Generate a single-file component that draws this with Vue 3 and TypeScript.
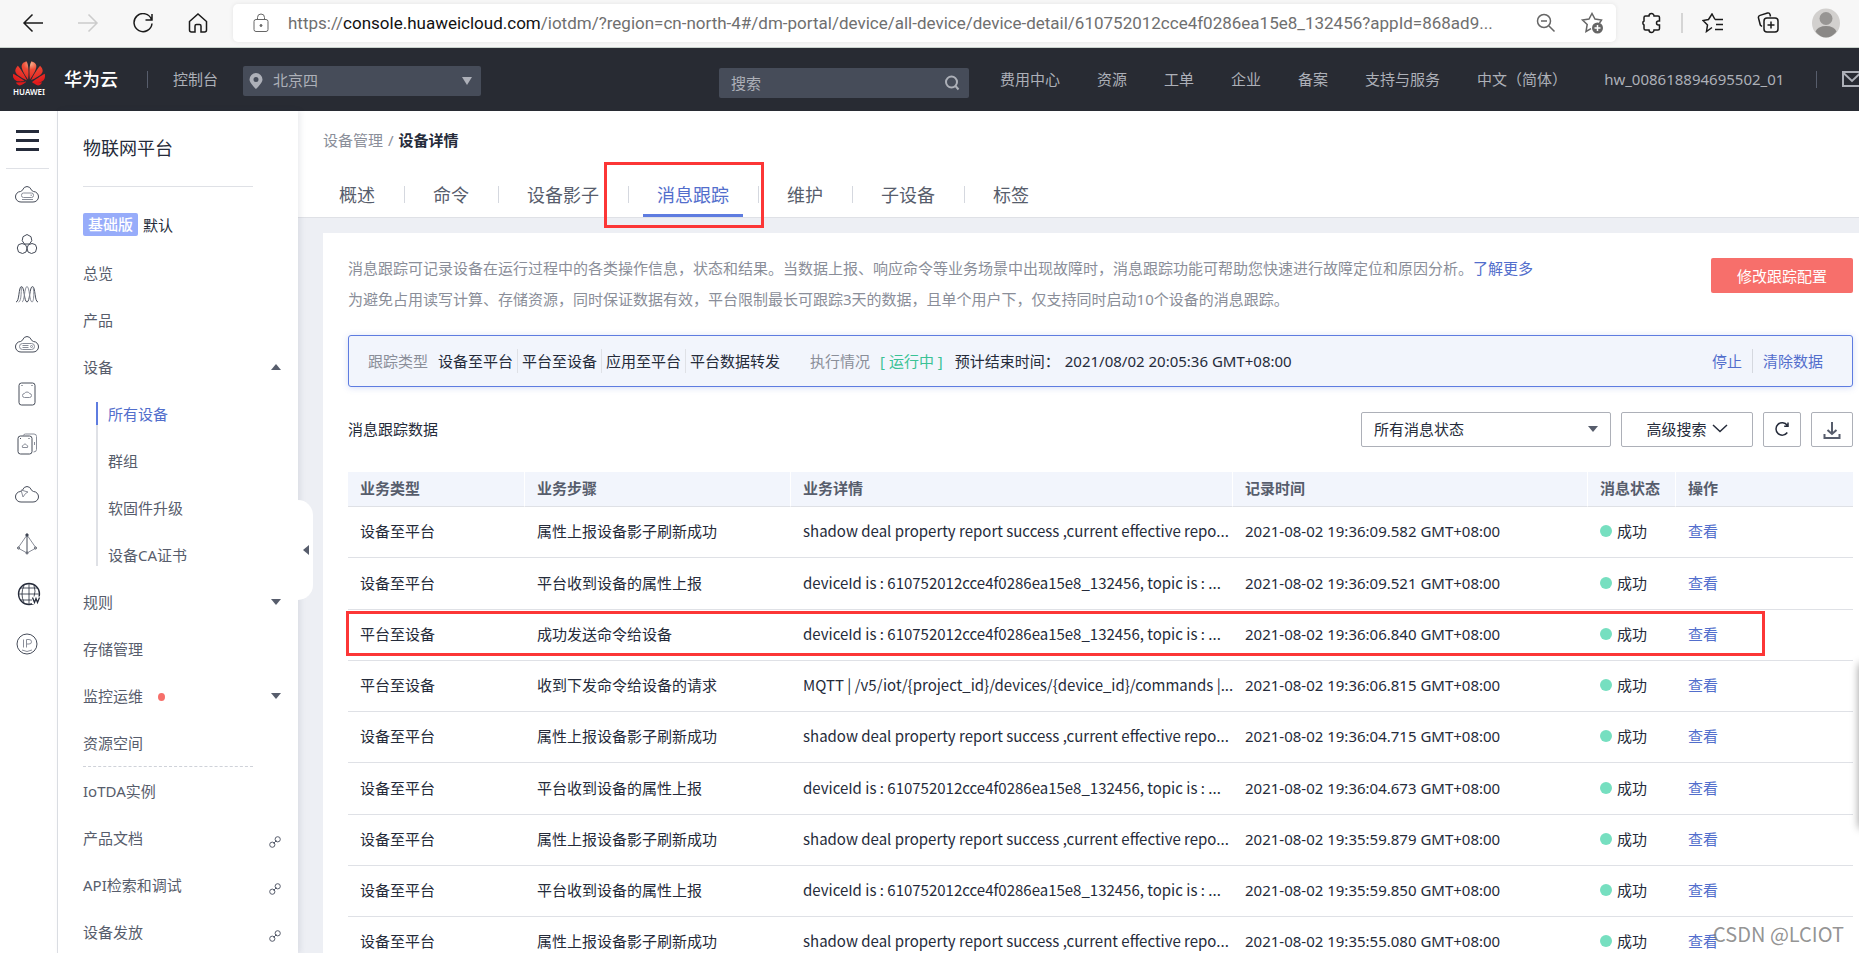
<script setup lang="ts">
import { ref } from 'vue'

interface NavItem {
  label: string
  caret?: 'up' | 'down'
  dot?: boolean
  link?: boolean
  divider?: boolean
  children?: string[]
}

interface TraceRow {
  type: string
  step: string
  detail: string
  time: string
  marked?: boolean
}

const headerLinks: string[] = ['费用中心', '资源', '工单', '企业', '备案', '支持与服务', '中文（简体）', 'hw_008618894695502_01']

const nav: NavItem[] = [
  { label: '总览' },
  { label: '产品' },
  { label: '设备', caret: 'up', children: ['所有设备', '群组', '软固件升级', '设备CA证书'] },
  { label: '规则', caret: 'down' },
  { label: '存储管理' },
  { label: '监控运维', caret: 'down', dot: true },
  { label: '资源空间', divider: true },
  { label: 'IoTDA实例' },
  { label: '产品文档', link: true },
  { label: 'API检索和调试', link: true },
  { label: '设备发放', link: true },
]

const tabs: string[] = ['概述', '命令', '设备影子', '消息跟踪', '维护', '子设备', '标签']
const activeTab = ref('消息跟踪')

const traceTypes: string[] = ['设备至平台', '平台至设备', '应用至平台', '平台数据转发']

const SHADOW = 'shadow deal property report success ,current effective repo...'
const DEVICE = 'deviceId is : 610752012cce4f0286ea15e8_132456, topic is : ...'

const rows: TraceRow[] = [
  { type: '设备至平台', step: '属性上报设备影子刷新成功', detail: SHADOW, time: '2021-08-02 19:36:09.582 GMT+08:00' },
  { type: '设备至平台', step: '平台收到设备的属性上报', detail: DEVICE, time: '2021-08-02 19:36:09.521 GMT+08:00' },
  { type: '平台至设备', step: '成功发送命令给设备', detail: DEVICE, time: '2021-08-02 19:36:06.840 GMT+08:00', marked: true },
  { type: '平台至设备', step: '收到下发命令给设备的请求', detail: 'MQTT | /v5/iot/{project_id}/devices/{device_id}/commands |...', time: '2021-08-02 19:36:06.815 GMT+08:00' },
  { type: '设备至平台', step: '属性上报设备影子刷新成功', detail: SHADOW, time: '2021-08-02 19:36:04.715 GMT+08:00' },
  { type: '设备至平台', step: '平台收到设备的属性上报', detail: DEVICE, time: '2021-08-02 19:36:04.673 GMT+08:00' },
  { type: '设备至平台', step: '属性上报设备影子刷新成功', detail: SHADOW, time: '2021-08-02 19:35:59.879 GMT+08:00' },
  { type: '设备至平台', step: '平台收到设备的属性上报', detail: DEVICE, time: '2021-08-02 19:35:59.850 GMT+08:00' },
  { type: '设备至平台', step: '属性上报设备影子刷新成功', detail: SHADOW, time: '2021-08-02 19:35:55.080 GMT+08:00' },
]
</script>

<template>
  <div class="page">
    <div class="browser">
      <button class="tool back" aria-label="后退">
        <svg width="22" height="20" viewBox="0 0 22 20"><path d="M21 10H2M10.500 1.500 2 10l8.500 8.500" /></svg>
      </button>
      <button class="tool forward" aria-label="前进">
        <svg width="22" height="20" viewBox="0 0 22 20"><path d="M1 10h19M11.500 1.500 20 10l-8.500 8.500" /></svg>
      </button>
      <button class="tool" aria-label="刷新">
        <svg width="22" height="20" viewBox="0 0 22 20"><path d="M19.500 6.500A9 9 0 1 0 20 10.500M20 1v6h-6.500" /></svg>
      </button>
      <button class="tool" aria-label="主页">
        <svg width="22" height="20" viewBox="0 0 22 20"><path d="M2.500 8.500 11 1l8.500 7.500V17q0 2-2 2H14v-6q0-1.500-1.500-1.500h-3Q8 11.500 8 13v6H4.500q-2 0-2-2z" /></svg>
      </button>
      <div class="address">
        <svg class="lock" width="16" height="20" viewBox="0 0 16 20"><rect x="1" y="6.500" width="14" height="12" rx="2" /><path d="M4.500 6.500V4.500a3.500 3.500 0 0 1 7 0v2" /><circle cx="8" cy="12.500" r="1" fill="#666" /></svg>
        <div class="url">https://<b>console.huaweicloud.com</b>/iotdm/?region=cn-north-4#/dm-portal/device/all-device/device-detail/610752012cce4f0286ea15e8_132456?appId=868ad9...</div>
        <button class="tool grey zoom" aria-label="缩放">
          <svg width="20" height="20" viewBox="0 0 20 20"><circle cx="8" cy="8" r="6.500" /><path d="M5 8h6M13 13l5.500 5.500" /></svg>
        </button>
        <button class="tool grey" aria-label="收藏">
          <svg width="24" height="22" viewBox="0 0 24 22"><path d="M19.500 11 21.500 8l-6.500-1L12 1.500 9 7 2.500 8l4.700 4.500L6 19.500l5-2.800" /><circle cx="17.500" cy="16" r="5.500" fill="#666" stroke="none" /><path d="M17.500 13v6M14.500 16h6" stroke="#fff" /></svg>
        </button>
      </div>
      <div class="extras">
        <button class="tool" aria-label="扩展">
          <svg width="20" height="22" viewBox="0 0 20 22"><path d="M4.500 4H8a2.500 2.500 0 0 1 5 0h4q1.500 0 1.500 1.500V9h-1a2 2 0 0 0 0 4h1v3.500q0 1.500-1.500 1.500h-4a2.500 2.500 0 0 1-5 0H4.500Q3 18 3 16.500V13a2.300 2.300 0 0 1 0-4V5.500Q3 4 4.500 4z" /></svg>
        </button>
        <i class="bar-sep"></i>
        <button class="tool" aria-label="收藏夹">
          <svg width="22" height="20" viewBox="0 0 22 20"><path d="M13 6.500h8M14 11.500h7M13 16.500h8M10 14.500 4.500 18.500 5.500 12 1 7.500l5.500-1L10 1l3 5.500" /></svg>
        </button>
        <button class="tool" aria-label="集锦">
          <svg width="22" height="22" viewBox="0 0 22 22"><path d="M5 14.500 3.300 13 1.500 6q-.5-2 1.500-2.600L10.500 1q2-.5 2.500 1.500l.5 2" /><rect x="7" y="6" width="14" height="14" rx="3" /><path d="M14 9.500v7M10.500 13h7" /></svg>
        </button>
        <button class="tool avatar" aria-label="个人资料">
          <svg width="28" height="30" viewBox="0 0 28 30"><ellipse cx="14" cy="15" rx="14" ry="14.500" fill="#d2d0ce" stroke="none" /><circle cx="14" cy="10.500" r="6.500" fill="#979593" stroke="none" /><path d="M3.500 23.500Q6 18 14 18t10.500 5.500Q20 29.500 14 29.500T3.500 23.500z" fill="#8a8886" stroke="none" /></svg>
        </button>
      </div>
    </div>

    <header class="topbar">
      <a class="logo" href="#">
        <svg width="32" height="25" viewBox="0 2.500 24 19" preserveAspectRatio="none">
          <defs>
            <radialGradient id="petal" cx=".55" cy=".1" r=".8"><stop offset="0" stop-color="#f7b08c" /><stop offset=".3" stop-color="#ee4a35" /><stop offset="1" stop-color="#e01a1c" /></radialGradient>
          </defs>
          <path fill="url(#petal)" d="M3.670 6.140S1.820 7.910 1.720 9.780v.35c.08 1.510 1.220 2.400 1.220 2.400 1.830 1.790 6.260 4.040 7.300 4.550 0 0 .06.03.1-.01l.02-.04v-.04C7.520 10.800 3.670 6.140 3.670 6.140zM9.650 18.600c-.02-.08-.1-.08-.1-.08l-7.380.26c.8 1.430 2.150 2.530 3.560 2.200.96-.25 3.160-1.780 3.880-2.300.06-.05.04-.09.04-.09zm.08-.12C6.490 16.020.21 12.280.21 12.280c-.15.46-.2.9-.21 1.300v.07c0 1.070.4 1.820.4 1.820.8 1.690 2.340 2.200 2.340 2.200.7.3 1.400.31 1.400.31.12.02 4.400 0 5.540 0 .05 0 .08-.05.08-.05v-.06c0-.03-.03-.05-.03-.05zM9.060 3.190a3.420 3.420 0 0 0-2.570 3.150v.41c.03.6.16 1.050.16 1.050.66 2.900 3.860 7.650 4.550 8.650.05.05.1.03.1.03a.1.1 0 0 0 .06-.1c1.060-10.600-1.110-13.420-1.110-13.420-.32.02-1.190.23-1.190.23zm8.300 2.270s-.49-1.800-2.440-2.280c0 0-.57-.14-1.170-.22 0 0-2.180 2.810-1.120 13.430.01.07.06.08.06.08.07.03.1-.03.1-.03.72-1.030 3.900-5.760 4.550-8.640 0 0 .36-1.400.02-2.340zm-2.920 13.070s-.07 0-.09.05c0 0-.01.07.03.1.7.51 2.850 2 3.880 2.300 0 0 .16.05.43.06h.14c.69-.02 1.900-.37 3-2.260l-7.400-.25zm7.830-8.410c.14-2.060-1.940-3.970-1.940-3.980 0 0-3.850 4.660-6.670 10.800 0 0-.03.08.02.13l.04.01h.06c1.060-.53 5.460-2.770 7.280-4.540 0 0 1.150-.93 1.210-2.420zm1.520 2.140s-6.280 3.740-9.520 6.200c0 0-.05.04-.03.11 0 0 .03.06.07.06 1.160 0 5.560 0 5.670-.02 0 0 .57-.02 1.270-.29 0 0 1.560-.5 2.370-2.270 0 0 .73-1.450.17-3.790z" />
        </svg>
        <span>HUAWEI</span>
      </a>
      <a class="brand" href="#">华为云</a>
      <i class="top-sep"></i>
      <a class="console" href="#">控制台</a>
      <div class="region">
        <svg class="pin" width="14" height="16" viewBox="0 0 14 16"><path fill-rule="evenodd" fill="#adb0b8" d="M7 0a6.500 6.500 0 0 1 6.500 6.500C13.500 10 7 16 7 16S.5 10 .5 6.500A6.500 6.500 0 0 1 7 0zm0 4a2.500 2.500 0 1 0 0 5 2.500 2.500 0 0 0 0-5z" /></svg>
        <select aria-label="区域"><option>北京四</option></select>
        <svg class="drop" width="10" height="8" viewBox="0 0 10 8"><path fill="#adb0b8" d="M0 0h10L5 8z" /></svg>
      </div>
      <div class="search">
        <input type="text" placeholder="搜索" aria-label="搜索" />
        <svg class="glass" width="16" height="16" viewBox="0 0 16 16"><circle cx="7.500" cy="7" r="5.500" /><path d="m11.500 11 3 3.500" /></svg>
      </div>
      <nav class="links"><a v-for="link in headerLinks" :key="link" href="#">{{ link }}</a></nav>
      <i class="top-sep last"></i>
      <a class="mail" href="#" aria-label="消息">
        <svg width="20" height="16" viewBox="0 0 20 16"><rect x="1" y="1" width="18" height="14" /><path d="m1.500 2 8.500 8 8.500-8" /></svg>
      </a>
    </header>

    <div class="body">
      <aside class="rail">
        <button class="burger" aria-label="服务列表"><i></i><i></i><i></i></button>
        <a href="#" aria-label="云服务器"><svg width="24" height="24" viewBox="0 0 24 24"><path d="M6 20a5 5 0 0 1-.5-10.500Q7 9 7.500 8 9 4.500 12 4.500T16.500 8q.5 1 2 1.500A5 5 0 0 1 18 20z" /><rect class="thin" x="6.500" y="11" width="12" height="4.500" rx="2" /><path class="thin" d="M7 17.500h11M15.500 13.200h1.500" /></svg></a>
        <a href="#" aria-label="容器"><svg width="24" height="24" viewBox="0 0 24 24"><path d="m12 2.500 4 2.200.8 4L14.500 12h-5L7.200 8.700l.8-4zM7 11.500l3.500 1.200L12 16l-1 4-3.500 1.500L3.500 20 2.300 16l1.200-3.300zM17 11.500l-3.500 1.200L12 16l1 4 3.500 1.500L20.500 20l1.200-4-1.200-3.300z" /></svg></a>
        <a href="#" aria-label="弹性伸缩"><svg width="24" height="24" viewBox="0 0 24 24"><path d="M1 20C4.500 20 3.500 4.500 6.500 4.500S9 20 12 20s2.500-15.500 5.500-15.500S19.500 20 23 20" /><path class="thin" d="M3.500 20C7 20 6 4.500 6.500 4.500M7 20C9.500 20 9.500 4.500 12 4.500S14.500 20 17 20s2-15.500.5-15.500" /></svg></a>
        <a href="#" aria-label="云硬盘"><svg width="24" height="24" viewBox="0 0 24 24"><path d="M6 20a5 5 0 0 1-.5-10.500Q7 9 7.500 8 9 4.500 12 4.500T16.500 8q.5 1 2 1.500A5 5 0 0 1 18 20z" /><rect class="thin" x="4.500" y="11.500" width="15" height="6" rx="3" /><path class="thin" d="M7.500 13.500h6M7.500 15.500h6" /><circle class="thin" cx="16.500" cy="14.500" r="1" /></svg></a>
        <a href="#" aria-label="存储"><svg width="24" height="24" viewBox="0 0 24 24"><rect x="4" y="1" width="16" height="22" rx="2.500" /><path d="M6.500 3.500h1M16.500 3.500h1" /><path class="thin" d="M9.500 15.500a2 2 0 0 1 0-4Q10 10 12 10t2.500 1.500a2 2 0 0 1 0 4z" /></svg></a>
        <a href="#" aria-label="备份"><svg width="24" height="24" viewBox="0 0 24 24"><rect x="3" y="4" width="14" height="18" rx="2.500" /><path class="thin" d="M8 4q.5-2 2.500-2H19q2.500 0 2.500 2.500v13q0 2.500-3 2.500M19.500 10v3" /><path d="M5 6.500h1M13.500 6.500h1" /><path class="thin" d="M7.500 15.500q-1-2 1-2.500 1.500-2.500 3 0 2 .5 1 2.500z" /></svg></a>
        <a href="#" aria-label="云迁移"><svg width="24" height="24" viewBox="0 0 24 24"><path d="M6 20a5 5 0 0 1-.5-10.500Q7 9 7.500 8 9 4.500 12 4.500T16.500 8q.5 1 2 1.500A5 5 0 0 1 18 20z" /><path class="thin" d="m6 8 7 2-2.500 1.500L8 15z" /></svg></a>
        <a href="#" aria-label="虚拟私有云"><svg width="24" height="24" viewBox="0 0 24 24"><path class="thin" d="M12 3 3 16l9 5 9-5z" /><path d="M12 3v18" /><circle cx="12" cy="3" r="1.200" fill="#333949" /><circle cx="3.500" cy="16" r="1" fill="#fff" /><circle cx="20.500" cy="16" r="1" fill="#fff" /><circle cx="12" cy="21" r="1" fill="#fff" /></svg></a>
        <a class="globe" href="#" aria-label="域名"><svg width="24" height="24" viewBox="0 0 24 24"><circle cx="12" cy="12" r="10.500" stroke-width="1.300" /><path stroke-width=".8" d="M12 1.500v21M1.500 12h21M3.500 6h17M3.500 18h12M7 20.500Q3 12 7 3.500M17 15q2-6 0-11.500" /><rect x="15" y="14.500" width="9" height="7.500" fill="#fff" stroke="none" /><path d="m15.500 15.500 2 5 1.500-4 1.500 4 2-5" stroke-width="1.300" /></svg></a>
        <a href="#" aria-label="弹性公网IP"><svg width="24" height="24" viewBox="0 0 24 24"><circle cx="12" cy="12" r="10" /><path class="thin" d="M8.500 7.500v8M11.500 15.500v-8H14q2.500 0 2.500 2.300T14 12h-2.500M7 18q5 3 10 0" /></svg></a>
      </aside>

      <aside class="side">
        <h2>物联网平台</h2>
        <div class="edition"><span class="badge">基础版</span>默认</div>
        <ul>
          <li v-for="item in nav" :key="item.label" :class="{ divided: item.divider }">
            <a class="row" href="#">
              <span>{{ item.label }}</span>
              <i v-if="item.dot" class="dot"></i>
              <svg v-if="item.caret" class="end" width="10" height="6" viewBox="0 0 10 6"><path fill="#575d6c" :d="item.caret === 'up' ? 'M0 6h10L5 0z' : 'M0 0h10L5 6z'" /></svg>
              <svg v-if="item.link" class="end chain" width="12" height="12" viewBox="0 0 12 12"><circle cx="3.300" cy="8.700" r="2.600" /><circle cx="8.700" cy="3.300" r="2.600" /><path d="m4.500 7.500 3-3" /></svg>
            </a>
            <ul v-if="item.children" class="sub">
              <li v-for="(child, n) in item.children" :key="child"><a class="row" :class="{ active: n === 0 }" href="#">{{ child }}</a></li>
            </ul>
          </li>
        </ul>
        <button class="collapse" aria-label="收起菜单"><svg width="6" height="10" viewBox="0 0 6 10"><path fill="#575d6c" d="M6 0v10L0 5z" /></svg></button>
      </aside>

      <main>
        <div class="head">
          <div class="crumbs"><a href="#">设备管理</a><span>/</span><strong>设备详情</strong></div>
          <div class="tabs" role="tablist">
            <button v-for="tab in tabs" :key="tab" role="tab" :aria-selected="tab === activeTab" :class="{ on: tab === activeTab }" @click="activeTab = tab">{{ tab }}</button>
            <i class="mark mark-tab"></i>
          </div>
        </div>

        <section class="panel">
          <div class="intro">
            <p>消息跟踪可记录设备在运行过程中的各类操作信息，状态和结果。当数据上报、响应命令等业务场景中出现故障时，消息跟踪功能可帮助您快速进行故障定位和原因分析。<a href="#">了解更多</a><br />为避免占用读写计算、存储资源，同时保证数据有效，平台限制最长可跟踪3天的数据，且单个用户下，仅支持同时启动10个设备的消息跟踪。</p>
            <button class="primary">修改跟踪配置</button>
          </div>

          <div class="status">
            <span class="muted">跟踪类型</span>
            <div class="types"><span v-for="t in traceTypes" :key="t">{{ t }}</span></div>
            <span class="muted">执行情况</span>
            <span class="running">[ 运行中 ]</span>
            <span class="until">预计结束时间：</span>
            <span>2021/08/02 20:05:36 GMT+08:00</span>
            <div class="acts"><a href="#">停止</a><a href="#">清除数据</a></div>
          </div>

          <div class="toolbar">
            <h3>消息跟踪数据</h3>
            <div class="select">
              <select aria-label="消息状态"><option>所有消息状态</option></select>
              <svg width="10" height="6" viewBox="0 0 10 6"><path fill="#575d6c" d="M0 0h10L5 6z" /></svg>
            </div>
            <button class="plain adv">高级搜索<svg width="16" height="9" viewBox="0 0 16 9"><path d="m1 1 7 6.500L15 1" /></svg></button>
            <button class="plain refresh" aria-label="刷新"><svg width="16" height="16" viewBox="0 0 16 16"><path d="M13.300 11.500A6.200 6.200 0 1 1 13.200 4.300M14 1.500v3.800h-3.800" /></svg></button>
            <button class="plain download" aria-label="下载"><svg width="18" height="18" viewBox="0 0 18 18"><path d="M9 1v12M4.500 9 9 13l4.500-4M1.500 13v4h15v-4" /></svg></button>
          </div>

          <table>
            <colgroup><col class="c1" /><col class="c2" /><col class="c3" /><col class="c4" /><col class="c5" /><col /></colgroup>
            <thead>
              <tr><th>业务类型</th><th>业务步骤</th><th>业务详情</th><th>记录时间</th><th>消息状态</th><th>操作</th></tr>
            </thead>
            <tbody>
              <tr v-for="row in rows" :key="row.time">
                <td>{{ row.type }}<i v-if="row.marked" class="mark mark-row"></i></td>
                <td>{{ row.step }}</td>
                <td class="detail">{{ row.detail }}</td>
                <td>{{ row.time }}</td>
                <td><span class="ok">成功</span></td>
                <td><a href="#">查看</a></td>
              </tr>
            </tbody>
          </table>
        </section>
      </main>
    </div>

    <div class="edge-shadow"></div>
    <div class="watermark">CSDN @LCIOT</div>
  </div>
</template>

<style>
body {
  margin: 0;
  overflow: hidden;
}
</style>

<style scoped>
.page {
  position: relative;
  display: flex;
  flex-direction: column;
  height: 100vh;
  overflow: hidden;
  background: #fff;
  color: #252b3a;
  font: 15px/24px "Noto Sans", "Noto Sans CJK SC", sans-serif;
}
.page * {
  box-sizing: border-box;
}
button,
input,
select {
  margin: 0;
  padding: 0;
  border: 0;
  background: none;
  color: inherit;
  font: inherit;
}
select {
  appearance: none;
}
a {
  color: #526ecc;
  text-decoration: none;
}
svg {
  display: block;
  flex: none;
  fill: none;
}
ul {
  margin: 0;
  padding: 0;
  list-style: none;
}

/* browser chrome */
.browser {
  display: flex;
  flex: none;
  align-items: center;
  height: 48px;
  padding-right: 19px;
  padding-bottom: 1px;
  padding-left: 22px;
  border-bottom: 1px solid #c9d2cc;
  background: #f7f7f7;
}
.tool {
  margin-right: 33px;
}
.tool svg {
  stroke: #1b1b1b;
  stroke-width: 1.5;
}
.browser > .tool:nth-child(4) {
  margin-right: 24px;
}
.forward svg {
  stroke: #ccc;
}
.address {
  display: flex;
  flex: 1;
  align-items: center;
  min-width: 0;
  height: 38px;
  padding: 0 12px 0 20px;
  border-radius: 5px;
  background: #fff;
  box-shadow: 0 0 4px #e4e4e4;
}
.lock,
.grey svg {
  stroke: #666;
}
.url {
  flex: 1;
  min-width: 0;
  margin-left: 19px;
  overflow: hidden;
  color: #6f6f6f;
  font-family: Roboto, sans-serif;
  font-size: 17px;
  white-space: nowrap;
}
.url b {
  color: #111;
  font-weight: 400;
}
.zoom {
  margin-right: 24px;
  margin-left: 8px;
}
.address .tool:last-child {
  margin-right: 0;
}
.extras {
  display: flex;
  align-items: center;
  margin-left: 25px;
}
.extras .tool {
  margin-right: 20px;
}
.bar-sep {
  width: 2px;
  height: 20px;
  margin-right: 19px;
  background: #d5d5d5;
}
.extras .tool:nth-child(3),
.extras .tool:nth-child(4) {
  margin-right: 33px;
}
.extras .avatar {
  margin-right: 0;
}

/* console header */
.topbar {
  display: flex;
  flex: none;
  align-items: center;
  height: 63px;
  padding-bottom: 2px;
  padding-left: 13px;
  overflow: hidden;
  background: #282b33;
  color: #adb0b8;
}
.topbar a {
  color: #adb0b8;
  white-space: nowrap;
}
.logo {
  display: flex;
  flex-direction: column;
  align-items: center;
  width: 32px;
  margin-top: 2px;
}
.topbar .logo span {
  color: #fff;
  font-size: 8px;
  font-weight: 600;
  line-height: 12px;
}
.topbar .brand {
  margin-left: 19px;
  color: #fff;
  font-size: 18px;
  font-weight: 500;
}
.top-sep {
  flex: none;
  width: 1px;
  height: 17px;
  margin: 2px 25px 0 29px;
  background: #575d6c;
}
.region {
  display: flex;
  align-items: center;
  width: 238px;
  height: 30px;
  margin: 4px 238px 0 25px;
  padding: 0 9px 0 6px;
  border-radius: 2px;
  background: #464c59;
}
.region select {
  flex: 1;
  min-width: 0;
  margin-left: 10px;
  padding-bottom: 2px;
}
.search {
  display: flex;
  align-items: center;
  width: 250px;
  height: 30px;
  margin-top: 8px;
  margin-right: 31px;
  padding: 0 9px 0 12px;
  border-radius: 2px;
  background: #464c59;
}
.search input {
  flex: 1;
  min-width: 0;
}
.search input::placeholder {
  color: #adb0b8;
  opacity: 1;
}
.glass,
.mail svg {
  stroke: #adb0b8;
  stroke-width: 2;
}
.links {
  display: flex;
  gap: 37px;
}
.top-sep.last {
  margin: 2px 25px 0 auto;
}
.mail {
  width: 17px;
  overflow: hidden;
}

/* left rails */
.body {
  display: flex;
  flex: 1;
  min-height: 0;
}
.rail {
  display: flex;
  flex: none;
  flex-direction: column;
  align-items: center;
  width: 58px;
  padding-right: 3px;
  border-right: 1px solid #dfe1e6;
}
.rail a {
  flex: none;
  margin: 13px 0;
}
.rail a svg {
  stroke: #464c59;
}
.rail a .thin {
  stroke: #8a8e99;
}
.rail .globe {
  padding-left: 4px;
}
.rail .globe svg {
  stroke: #252b3a;
}
.burger {
  display: flex;
  flex: none;
  flex-direction: column;
  align-items: center;
  gap: 6px;
  width: 43px;
  height: 58px;
  padding-top: 19px;
  border-bottom: 1px solid #dfe1e6;
}
.burger i {
  width: 23px;
  height: 3px;
  background: #252b3a;
}
.side {
  position: relative;
  z-index: 2;
  flex: none;
  width: 240px;
  padding-left: 25px;
  background: #fff;
  box-shadow: 2px 0 6px rgba(40, 50, 80, 0.1);
}
.side h2 {
  width: 170px;
  margin: 0;
  padding: 21px 0;
  border-bottom: 1px solid #dfe1e6;
  font-size: 18px;
  font-weight: 400;
  line-height: 33px;
}
.edition {
  display: flex;
  align-items: center;
  height: 77px;
  padding-bottom: 2px;
}
.badge {
  height: 23px;
  margin-right: 5px;
  padding: 0 5px;
  border-radius: 2px;
  background: #97acfa;
  color: #fff;
  font-weight: 500;
  line-height: 23px;
}
.side > ul {
  margin-top: -15px;
}
.side .row {
  display: flex;
  align-items: center;
  height: 47px;
  color: #575d6c;
}
.dot {
  width: 7px;
  height: 8px;
  margin-top: 2px;
  margin-left: 15px;
  border-radius: 50%;
  background: #f66f6a;
}
.end {
  margin-right: 17px;
  margin-left: auto;
}
.chain {
  margin-top: 8px;
  stroke: #575d6c;
}
.divided::after {
  display: block;
  width: 170px;
  border-bottom: 1px dashed #cfd2d9;
  content: "";
}
.sub {
  margin: 12px 0 12px 13px;
  border-left: 2px solid #dfe1e6;
}
.sub .row {
  height: 23px;
  padding-left: 10px;
}
.sub li + li {
  margin-top: 24px;
}
.side .row.active {
  margin-left: -2px;
  border-left: 2px solid #5e7ce0;
  color: #526ecc;
}
.collapse {
  position: absolute;
  top: 389px;
  left: 240px;
  width: 15px;
  height: 100px;
  padding-left: 5px;
  border-radius: 0 15px 15px 0;
  background: #fff;
}

/* content */
main {
  display: flex;
  flex: 1;
  flex-direction: column;
  min-width: 0;
  background: #edeff4;
}
.head {
  flex: none;
  padding: 17px 0 0 25px;
  border-bottom: 1px solid #dfe1e6;
  background: #fff;
}
.crumbs {
  display: flex;
  gap: 5px;
  color: #8a8e99;
}
.crumbs a {
  color: #8a8e99;
}
.crumbs strong {
  color: #252b3a;
}
.tabs {
  position: relative;
  display: flex;
  align-items: flex-end;
  gap: 30px;
  height: 65px;
  padding-left: 2px;
}
.tabs button {
  position: relative;
  height: 43px;
  padding: 0 14px;
  border-bottom: 3px solid transparent;
  color: #575d6c;
  font-size: 18px;
  line-height: 42px;
}
.tabs button + button::before {
  position: absolute;
  top: 12px;
  left: -15px;
  width: 1px;
  height: 17px;
  background: #d5d8df;
  content: "";
}
.tabs .on {
  border-color: #5e7ce0;
  color: #526ecc;
}
.mark {
  position: absolute;
  border: 3px solid #fc3636;
  pointer-events: none;
}
.mark-tab {
  top: 10px;
  left: 281px;
  z-index: 3;
  width: 160px;
  height: 66px;
}
.panel {
  flex: 1;
  min-height: 0;
  margin: 15px 0 0 25px;
  padding: 20px 6px 0 25px;
  background: #fff;
}
.intro {
  display: flex;
  justify-content: space-between;
}
.intro p {
  margin: 0;
  color: #8a8e99;
  line-height: 31px;
}
.primary {
  flex: none;
  width: 142px;
  height: 35px;
  margin-top: 5px;
  border-radius: 2px;
  background: #f76f6b;
  color: #fff;
}
.status {
  display: flex;
  align-items: center;
  height: 52px;
  margin-top: 20px;
  padding: 0 29px 0 19px;
  border: 1px solid #5e7ce0;
  border-radius: 3px;
  background: #f2f5fc;
  box-shadow: 0 1px 6px rgba(94, 124, 224, 0.25);
  white-space: nowrap;
}
.muted {
  margin-right: 10px;
  color: #8a8e99;
}
.types {
  display: flex;
  margin-right: 30px;
}
.types span + span {
  margin-left: 4px;
  padding-left: 4px;
  border-left: 1px solid #dfe1e6;
}
.running {
  margin-right: 12px;
  color: #3ac295;
}
.until {
  margin-right: 5px;
}
.acts {
  display: flex;
  margin-left: auto;
}
.acts a + a {
  margin-left: 10px;
  padding-left: 10px;
  border-left: 1px solid #d5d8df;
}
.toolbar {
  display: flex;
  align-items: center;
  gap: 10px;
  margin: 25px 0;
}
.toolbar h3 {
  flex: 1;
  margin: 0;
  padding-bottom: 2px;
  font-size: 15px;
  font-weight: 400;
}
.select,
.plain {
  display: flex;
  align-items: center;
  justify-content: center;
  height: 35px;
  padding-bottom: 2px;
  border: 1px solid #adb0b8;
  border-radius: 2px;
}
.select {
  width: 250px;
  padding: 0 12px 2px;
}
.select select {
  flex: 1;
  min-width: 0;
}
.plain svg {
  stroke: #252b3a;
  stroke-width: 1.5;
}
.adv {
  gap: 5px;
  width: 132px;
}
.refresh {
  width: 38px;
}
.download {
  width: 42px;
  padding-bottom: 0;
}
.download svg {
  stroke: #575d6c;
  stroke-width: 2;
}
table {
  width: 100%;
  border-collapse: separate;
  border-spacing: 0;
  table-layout: fixed;
}
.c1 {
  width: 176px;
}
.c2 {
  width: 266px;
}
.c3 {
  width: 442px;
}
.c4 {
  width: 355px;
}
.c5 {
  width: 88px;
}
th,
td {
  padding: 0 0 2px 12px;
  border-bottom: 1px solid #dfe1e6;
  text-align: left;
  white-space: nowrap;
}
th {
  height: 35px;
  background: #f2f5fc;
  color: #575d6c;
  font-weight: 700;
}
th + th {
  border-left: 1px solid #fff;
}
td {
  height: 51px;
}
td + td {
  padding-left: 13px;
}
.detail {
  font-family: "Noto Sans CJK SC", sans-serif;
}
tbody tr {
  position: relative;
}
tbody tr:nth-child(4n + 2) td {
  height: 52px;
}
.mark-row {
  top: 1px;
  right: 88px;
  bottom: 5px;
  left: -2px;
}
.ok {
  display: flex;
  align-items: center;
  gap: 5px;
}
.ok::before {
  width: 12px;
  height: 12px;
  border-radius: 50%;
  background: #76dfc0;
  content: "";
}
.edge-shadow {
  position: absolute;
  top: 664px;
  right: -10px;
  width: 10px;
  height: 164px;
  box-shadow: 0 0 8px rgba(0, 0, 0, 0.4);
}
.watermark {
  position: absolute;
  right: 15px;
  bottom: 5px;
  color: rgba(120, 120, 120, 0.8);
  font-family: "Noto Sans CJK SC", sans-serif;
  font-size: 20px;
  line-height: 28px;
}
</style>
